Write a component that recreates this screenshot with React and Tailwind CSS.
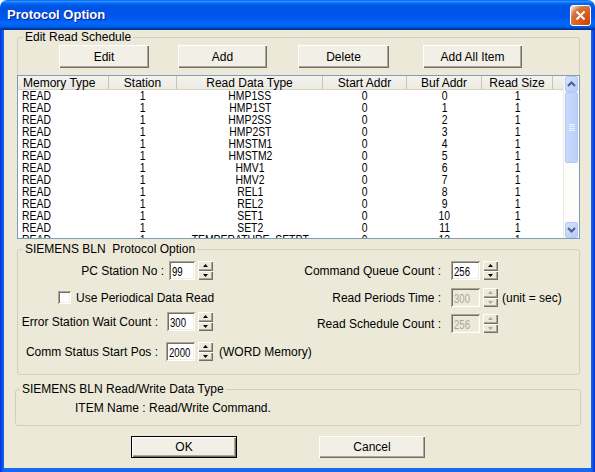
import React from "react";

const rows = [
  ["READ", "1", "HMP1SS", "0", "0", "1"],
  ["READ", "1", "HMP1ST", "0", "1", "1"],
  ["READ", "1", "HMP2SS", "0", "2", "1"],
  ["READ", "1", "HMP2ST", "0", "3", "1"],
  ["READ", "1", "HMSTM1", "0", "4", "1"],
  ["READ", "1", "HMSTM2", "0", "5", "1"],
  ["READ", "1", "HMV1", "0", "6", "1"],
  ["READ", "1", "HMV2", "0", "7", "1"],
  ["READ", "1", "REL1", "0", "8", "1"],
  ["READ", "1", "REL2", "0", "9", "1"],
  ["READ", "1", "SET1", "0", "10", "1"],
  ["READ", "1", "SET2", "0", "11", "1"],
  ["READ", "1", "TEMPERATURE_SETPT", "0", "12", "1"],
];

const cols = [
  { w: "w-[91px]", label: "Memory Type", head: "justify-start pl-[5px]", cell: "justify-start pl-[4px]", origin: "origin-left" },
  { w: "w-[68px]", label: "Station", head: "justify-center", cell: "justify-center", origin: "origin-center" },
  { w: "w-[146px]", label: "Read Data Type", head: "justify-center", cell: "justify-center", origin: "origin-center" },
  { w: "w-[84px]", label: "Start Addr", head: "justify-center", cell: "justify-center", origin: "origin-center" },
  { w: "w-[75px]", label: "Buf Addr", head: "justify-center", cell: "justify-center", origin: "origin-center" },
  { w: "w-[71px]", label: "Read Size", head: "justify-center", cell: "justify-center", origin: "origin-center" },
];

function Btn({ className = "", children, def }) {
  return (
    <div
      className={`shrink-0 flex items-center justify-center bg-[#F1EFE6] ${
        def
          ? "border border-black shadow-[inset_1px_1px_#fff,inset_-1px_-1px_#716F64,inset_-2px_-2px_#ACA899]"
          : "shadow-[inset_1px_1px_#fff,inset_-1px_-1px_#716F64,inset_-2px_-2px_#ACA899]"
      } ${className}`}
    >
      {children}
    </div>
  );
}

function Arrow({ up, disabled }) {
  return (
    <svg width="5" height="3" viewBox="0 0 5 3">
      <path
        d={up ? "M0 3 L2.5 0 L5 3Z" : "M0 0 L2.5 3 L5 0Z"}
        fill={disabled ? "#ACA899" : "#000"}
      />
    </svg>
  );
}

function Spin({ disabled }) {
  const half =
    "flex-1 flex items-center justify-center bg-[#ECE9D8] shadow-[inset_1px_1px_#fff,inset_-1px_-1px_#716F64,inset_-2px_-2px_#ACA899]";
  return (
    <div className="shrink-0 flex flex-col w-[15px] h-[19px] ml-[3px]">
      <div className={half}>
        <Arrow up disabled={disabled} />
      </div>
      <div className={half}>
        <Arrow disabled={disabled} />
      </div>
    </div>
  );
}

function Edit({ value, w, disabled }) {
  return (
    <div
      className={`${w} shrink-0 h-[19px] pl-[3px] pt-[2px] overflow-hidden ${
        disabled ? "bg-[#ECE9D8] text-[#ACA899]" : "bg-white text-black"
      } shadow-[inset_1px_1px_#ACA899,inset_-1px_-1px_#fff,inset_2px_2px_#716F64,inset_-2px_-2px_#F1EFE2]`}
    >
      <span className="inline-block text-[12px] leading-[12px] scale-x-[0.8] origin-left">{value}</span>
    </div>
  );
}

function ScrollBtn({ up }) {
  return (
    <div className="h-[16px] mx-[1px] rounded-[2px] border border-[#B5C8F6] bg-[linear-gradient(135deg,#D4E0FD,#B9CCF8)] flex items-center justify-center">
      <svg width="9" height="6" viewBox="0 0 9 6">
        <path
          d={up ? "M1 5 L4.5 1.5 L8 5" : "M1 1 L4.5 4.5 L8 1"}
          stroke="#4D6185"
          strokeWidth="2"
          fill="none"
        />
      </svg>
    </div>
  );
}

export default function App() {
  return (
    <div className="w-[595px] h-[472px] flex flex-col overflow-hidden bg-white font-['Liberation_Sans',Arial,sans-serif] text-[12px] text-black select-none">
      {/* Title bar */}
      <div className="h-[30px] shrink-0 rounded-t-[7px] flex items-center pl-[7px] pr-[4px] bg-[linear-gradient(to_bottom,#0058EE_0%,#3593FF_4%,#288EFF_6%,#127DFF_8%,#036FFC_10%,#0262EE_14%,#0057E5_20%,#0054E3_24%,#0055EB_56%,#005BF5_66%,#026AFE_76%,#0062EF_86%,#0052D6_92%,#0040AB_94%,#003092_100%)]">
        <span className="text-white font-bold text-[13px] [text-shadow:1px_1px_0_#0A1E8C]">
          Protocol Option
        </span>
        <div className="ml-auto w-[21px] h-[21px] rounded-[3px] border border-white flex items-center justify-center bg-[radial-gradient(circle_at_90%_90%,#CC4600_0%,#DC6527_55%,#CD7546_70%,#FFCCB2_90%,#fff_100%)]">
          <svg width="11" height="11" viewBox="0 0 11 11">
            <path d="M1.5 1.5 L9.5 9.5 M9.5 1.5 L1.5 9.5" stroke="#fff" strokeWidth="2" />
          </svg>
        </div>
      </div>

      {/* Frame */}
      <div className="flex-1 flex px-[4px] pb-[4px] bg-[linear-gradient(to_right,#0831D9,#166AEE_4px,#166AEE_calc(100%-4px),#0831D9)]">
        <div className="flex-1 bg-[#ECE9D8] flex flex-col">
          {/* Group 1 */}
          <fieldset className="ml-[13px] mt-[1px] w-[563px] border border-[#D0D0BF] rounded-[3px]">
            <legend className="ml-[5px] px-[2px] leading-[12px]">Edit Read Schedule</legend>
            <div className="flex mt-[2px] pl-[41px]">
              <Btn className="w-[90px] h-[23px]">Edit</Btn>
              <Btn className="w-[89px] h-[23px] ml-[29px]">Add</Btn>
              <Btn className="w-[91px] h-[23px] ml-[31px]">Delete</Btn>
              <Btn className="w-[99px] h-[23px] ml-[34px]">Add All Item</Btn>
            </div>
            <div className="mt-[7px] -mx-px -mb-px h-[164px] border border-[#7F9DB9] bg-white flex">
              <div className="flex-1 flex flex-col overflow-hidden">
                <div className="h-[14px] shrink-0 flex bg-[linear-gradient(to_bottom,#F4F3EE,#EBEAE3)] border-b border-[#D6D2C2]">
                  {cols.map((c) => (
                    <div
                      key={c.label}
                      className={`${c.w} shrink-0 flex items-center ${c.head} border-r border-[#C7C5B2] leading-[12px] whitespace-nowrap`}
                    >
                      {c.label}
                    </div>
                  ))}
                  <div className="flex-1" />
                </div>
                {rows.map((r, i) => (
                  <div key={i} className="h-[12px] shrink-0 flex text-[13px] leading-[12px]">
                    {r.map((v, j) => (
                      <div key={j} className={`${cols[j].w} shrink-0 flex ${cols[j].cell} whitespace-nowrap`}>
                        <span className={`inline-block scale-x-[0.8] ${cols[j].origin}`}>{v}</span>
                      </div>
                    ))}
                  </div>
                ))}
              </div>
              <div className="w-[16px] shrink-0 flex flex-col bg-[#FCFCFA] border-l border-[#EEEDE5]">
                <ScrollBtn up />
                <div className="flex-1 flex flex-col">
                  <div className="h-[71px] mx-[1px] rounded-[2px] border border-[#B5C8F6] bg-[linear-gradient(to_right,#C9D8FC,#BDD0FA)] flex flex-col items-center justify-center gap-[1px]">
                    <div className="w-[6px] h-px bg-[#EEF4FE]" />
                    <div className="w-[6px] h-px bg-[#EEF4FE]" />
                    <div className="w-[6px] h-px bg-[#EEF4FE]" />
                    <div className="w-[6px] h-px bg-[#EEF4FE]" />
                  </div>
                </div>
                <ScrollBtn />
              </div>
            </div>
          </fieldset>

          {/* Group 2 */}
          <fieldset className="ml-[13px] mt-[4px] w-[563px] border border-[#D0D0BF] rounded-[3px] pb-[13px]">
            <legend className="ml-[5px] px-[2px] leading-[12px] whitespace-pre">SIEMENS BLN  Protocol Option</legend>
            <div className="flex">
              <div className="w-[273px] shrink-0 flex flex-col whitespace-nowrap">
                <div className="flex items-center mt-[6px]">
                  <div className="w-[146px] shrink-0 text-right">PC Station No :</div>
                  <div className="ml-[5px] shrink-0">
                    <Edit value="99" w="w-[26px]" />
                  </div>
                  <Spin />
                </div>
                <div className="flex items-center mt-[8px] h-[19px]">
                  <div className="ml-[40px] shrink-0 w-[13px] h-[13px] bg-white shadow-[inset_1px_1px_#ACA899,inset_-1px_-1px_#fff,inset_2px_2px_#716F64,inset_-2px_-2px_#F1EFE2]" />
                  <div className="ml-[5px]">Use Periodical Data Read</div>
                </div>
                <div className="flex items-center mt-[5px]">
                  <div className="w-[140px] shrink-0 text-right">Error Station Wait Count :</div>
                  <div className="ml-[9px] shrink-0">
                    <Edit value="300" w="w-[28px]" />
                  </div>
                  <Spin />
                </div>
                <div className="flex items-center mt-[11px]">
                  <div className="w-[140px] shrink-0 text-right">Comm Status Start Pos :</div>
                  <div className="ml-[8px] shrink-0">
                    <Edit value="2000" w="w-[29px]" />
                  </div>
                  <Spin />
                  <div className="ml-[6px] shrink-0">(WORD Memory)</div>
                </div>
              </div>
              <div className="flex flex-col whitespace-nowrap">
                <div className="flex items-center mt-[6px]">
                  <div className="w-[150px] shrink-0 text-right">Command Queue Count :</div>
                  <div className="ml-[10px] shrink-0">
                    <Edit value="256" w="w-[29px]" />
                  </div>
                  <Spin />
                </div>
                <div className="flex items-center mt-[8px]">
                  <div className="w-[150px] shrink-0 text-right">Read Periods Time :</div>
                  <div className="ml-[10px] shrink-0">
                    <Edit value="300" w="w-[29px]" disabled />
                  </div>
                  <Spin disabled />
                  <div className="ml-[4px] shrink-0">(unit = sec)</div>
                </div>
                <div className="flex items-center mt-[7px]">
                  <div className="w-[150px] shrink-0 text-right">Read Schedule Count :</div>
                  <div className="ml-[10px] shrink-0">
                    <Edit value="256" w="w-[29px]" disabled />
                  </div>
                  <Spin disabled />
                </div>
              </div>
            </div>
          </fieldset>

          {/* Group 3 */}
          <fieldset className="ml-[11px] mt-[8px] w-[566px] border border-[#D0D0BF] rounded-[3px] pb-[11px]">
            <legend className="ml-[4px] px-[2px] leading-[12px]">SIEMENS BLN Read/Write Data Type</legend>
            <div className="mt-[7px] pl-[59px] leading-[12px]">ITEM Name : Read/Write Command.</div>
          </fieldset>

          {/* Bottom buttons */}
          <div className="flex mt-[10px] pl-[127px]">
            <Btn def className="w-[106px] h-[22px]">OK</Btn>
            <Btn className="w-[106px] h-[22px] ml-[82px]">Cancel</Btn>
          </div>
        </div>
      </div>
    </div>
  );
}
